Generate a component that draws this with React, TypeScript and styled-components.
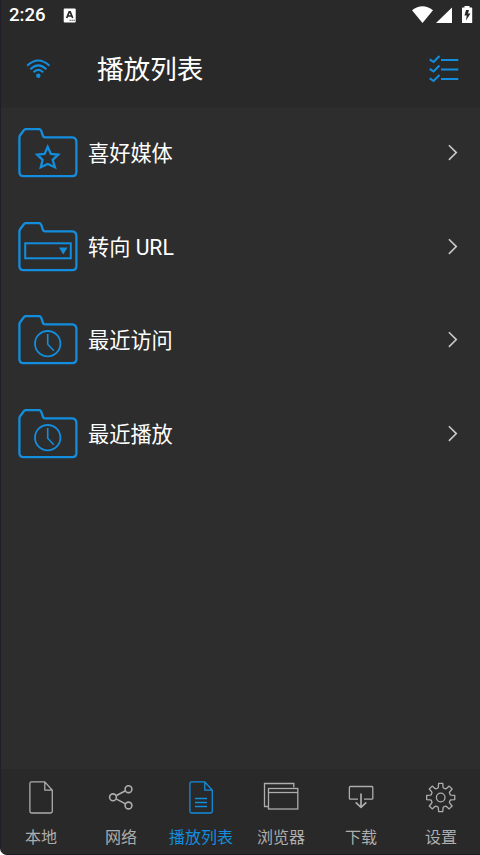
import React from 'react';
import styled, { createGlobalStyle } from 'styled-components';

const BLUE = '#138ddd';
const GREY = '#adadad';

const GlobalStyle = createGlobalStyle`
  * { box-sizing: border-box; }
  body { margin: 0; background: #fff; overflow: hidden; }
`;

const Screen = styled.div`
  width: 480px;
  height: 855px;
  display: flex;
  flex-direction: column;
  overflow: hidden;
  background: #2d2d2d;
  border-left: 1px solid #211e2a;
  border-bottom: 1px solid #1d1826;
  border-bottom-left-radius: 7px;
  color: #fff;
  font-family: Roboto, 'Noto Sans CJK SC', sans-serif;
  svg { display: block; flex: none; }
`;

const StatusBar = styled.div`
  height: 31px;
  flex: none;
  display: flex;
  align-items: center;
  padding: 0 7px 1px 8px;
  background: #292929;
`;

const Clock = styled.span`
  width: 54px;
  font-size: 18.6px;
  font-weight: 500;
  line-height: 31px;
`;

const StatusIcons = styled.div`
  margin-left: auto;
`;

const Header = styled.header`
  height: 77px;
  flex: none;
  display: flex;
  align-items: center;
  padding: 0 21px 0 25px;
  background: #292929;
  border-bottom: 1px solid #2b2b2b;
`;

const Title = styled.h1`
  margin: 0 auto 0 46px;
  padding-top: 2px;
  font-size: 26.6px;
  font-weight: 400;
  line-height: 74px;
`;

const List = styled.main`
  flex: 1;
  min-height: 0;
`;

const Row = styled.div`
  height: 93.5px;
  display: flex;
  align-items: center;
  gap: 10px;
  padding: 0 22px 3px 17px;
`;

const RowLabel = styled.span`
  flex: 1;
  padding-top: 2px;
  font-size: 21.2px;
  line-height: 30px;
`;

const Nav = styled.nav`
  height: 85px;
  flex: none;
  display: grid;
  grid-template-columns: repeat(6, 80px);
  background: #292929;
`;

const Tab = styled.div<{ $active?: boolean }>`
  display: flex;
  flex-direction: column;
  align-items: center;
  padding-top: 8px;
  color: ${p => (p.$active ? BLUE : GREY)};
`;

const TabLabel = styled.span`
  margin-top: 9px;
  font-size: 16px;
  line-height: 24px;
  white-space: nowrap;
`;

const AppBadge = () => (
  <svg width="13" height="15" viewBox="0 0 13 15">
    <rect x="0.7" y="0.6" width="12" height="13.8" rx="1" fill="#fff" />
    <path d="M3.700 10 6.200 3.900h1l2.500 6.100M4.700 8h4" fill="none" stroke="#292929" strokeWidth="1.7" />
    <path d="M6.600 12.300h1.200M8.600 12.300h1.200M10.600 12.300h1.200" stroke="#292929" strokeWidth="1.100" />
  </svg>
);

const SystemIcons = () => (
  <svg width="61" height="20" viewBox="412 5 61 20">
    <path d="M412 10.200Q422.500 2.300 433 10.200L422.500 23Z" fill="#fff" />
    <path d="M436 23 452 7.500V23Z" fill="#fff" />
    <path d="M464.500 6h5v1.500h2.200q.5 0 .5.500v14.500q0 .5-.5.500h-9.200q-.5 0-.5-.5v-14.500q0-.5.500-.5h2Z" fill="#fff" />
    <path d="M466 10h3l-1 3.500h2.500l-4.500 7 .7-5h-2.200Z" fill="#292929" />
  </svg>
);

const WifiIcon = () => (
  <svg width="25" height="22" viewBox="0 0 25 22" fill="none" stroke={BLUE} strokeWidth="2">
    <path d="M1.200 7.700Q12.300-2.700 23.500 7.700M4.300 11.300Q12.300 3.500 20.400 11.300M7.500 14.300Q12.300 9.500 17.200 14.300" />
    <circle cx="12.300" cy="17.700" r="2.200" fill={BLUE} stroke="none" />
  </svg>
);

const ChecklistIcon = () => (
  <svg width="30" height="28" viewBox="429 55 30 28" fill="none" stroke={BLUE} strokeWidth="2.100">
    <path d="M429.700 59.300 433.600 62 439.500 56M429.700 68.800 433.600 71.500 439.500 65.500M429.700 78.300 433.600 81 439.500 75" />
    <path d="M441 60h17.300M441 69.500h17.300M441 79h17.300" />
  </svg>
);

type FolderKind = 'star' | 'url' | 'clock';

const FolderIcon = ({ kind }: { kind: FolderKind }) => (
  <svg width="60" height="50" viewBox="0 0 60 50" fill="none" stroke={BLUE} strokeWidth="2.300">
    <path d="M2.300 7 6 2Q6.800 1.100 8 1.100H21Q22.500 1.100 23.200 2.700L25 8Q25.500 9.300 27 9.300H54.300Q58.400 9.800 58.400 14V44Q58.400 48.200 54.300 48.200H5.500Q1.400 48.200 1.400 44V9.500Q1.400 8.300 2.300 7Z" />
    {kind === 'star' && (
      <path d="M29.700 18.900 32.900 26 40.200 26.700 34.700 31.800 36.900 39.200 29.700 36 22.800 39.200 24.600 31.800 19.200 26.700 26.600 26Z" />
    )}
    {kind === 'url' && (
      <>
        <rect x="7.200" y="21.300" width="45.600" height="15" strokeWidth="2" />
        <path d="M41 25.500h8.500l-4.250 7Z" fill={BLUE} stroke="none" />
      </>
    )}
    {kind === 'clock' && (
      <>
        <circle cx="29.700" cy="28.700" r="12.700" strokeWidth="1.800" />
        <path d="M29.700 18.900V29.200L35.800 35.700" strokeWidth="1.600" />
      </>
    )}
  </svg>
);

const Chevron = () => (
  <svg width="10" height="18" viewBox="0 0 10 18" fill="none" stroke="#c9c9c9" strokeWidth="1.600">
    <path d="M.900 1.300 8.300 8.600 .900 15.900" />
  </svg>
);

type TabKind = 'local' | 'network' | 'playlist' | 'browser' | 'download' | 'settings';

const gearPath = (() => {
  const points: string[] = [];
  for (let i = 0; i < 8; i++) {
    const base = -90 + i * 45;
    [[-16, 9.900], [-12.500, 10.800], [-8.500, 14.200], [8.500, 14.200], [12.500, 10.800], [16, 9.900]].forEach(([turn, radius]) => {
      const a = ((base + turn) * Math.PI) / 180;
      points.push(`${(19.700 + radius * Math.cos(a)).toFixed(2)} ${(20.500 + radius * Math.sin(a)).toFixed(2)}`);
    });
  }
  return `M${points.join('L')}Z`;
})();

const TabIcon = ({ kind }: { kind: TabKind }) => (
  <svg width="40" height="40" viewBox="0 0 40 40" fill="none" stroke="currentColor" strokeWidth="1.300" strokeLinejoin="round">
    {(kind === 'local' || kind === 'playlist') && (
      <path d="M10.500 4.900H23.800L31.300 13.200V34.300Q31.300 36 29.600 36H10.500Q8.900 36 8.900 34.300V6.500Q8.900 4.900 10.500 4.900ZM23.800 4.900V13.200H31.300" />
    )}
    {kind === 'playlist' && <path d="M14 21.500H26M14 25.500H26M14 29.500H26" />}
    {kind === 'network' && (
      <g strokeWidth="1.600">
        <circle cx="12" cy="20.300" r="3.400" />
        <circle cx="27.500" cy="12.200" r="3.400" />
        <circle cx="27.500" cy="28.500" r="3.400" />
        <path d="M15 18.700 24.500 13.800M15 21.900 24.500 26.900" />
      </g>
    )}
    {kind === 'browser' && (
      <g strokeLinejoin="miter">
        <path d="M7 29.500H3.500V6.500H32.800V10.500" />
        <rect x="7.500" y="11.500" width="29.300" height="20.500" />
        <path d="M7.500 15.500H36.800" />
      </g>
    )}
    {kind === 'download' && (
      <>
        <path d="M17 22.200H9.200Q8.400 22.200 8.400 21.400V10.400Q8.400 9.500 9.200 9.500H30.900Q31.800 9.500 31.800 10.400V21.400Q31.800 22.200 30.900 22.200H23" />
        <path d="M20 16.500V30.300M14.700 25.300 20 30.300 25.300 25.300" strokeWidth="1.700" />
      </>
    )}
    {kind === 'settings' && (
      <>
        <path d={gearPath} />
        <circle cx="19.700" cy="20.500" r="4.300" />
      </>
    )}
  </svg>
);

const folders: { kind: FolderKind; label: string }[] = [
  { kind: 'star', label: '喜好媒体' },
  { kind: 'url', label: '转向 URL' },
  { kind: 'clock', label: '最近访问' },
  { kind: 'clock', label: '最近播放' },
];

const tabs: { kind: TabKind; label: string }[] = [
  { kind: 'local', label: '本地' },
  { kind: 'network', label: '网络' },
  { kind: 'playlist', label: '播放列表' },
  { kind: 'browser', label: '浏览器' },
  { kind: 'download', label: '下载' },
  { kind: 'settings', label: '设置' },
];

export default function App() {
  return (
    <>
      <GlobalStyle />
      <Screen>
        <StatusBar>
          <Clock>2:26</Clock>
          <AppBadge />
          <StatusIcons><SystemIcons /></StatusIcons>
        </StatusBar>
        <Header>
          <WifiIcon />
          <Title>播放列表</Title>
          <ChecklistIcon />
        </Header>
        <List>
          {folders.map(item => (
            <Row key={item.label}>
              <FolderIcon kind={item.kind} />
              <RowLabel>{item.label}</RowLabel>
              <Chevron />
            </Row>
          ))}
        </List>
        <Nav>
          {tabs.map(tab => (
            <Tab key={tab.kind} $active={tab.kind === 'playlist'}>
              <TabIcon kind={tab.kind} />
              <TabLabel>{tab.label}</TabLabel>
            </Tab>
          ))}
        </Nav>
      </Screen>
    </>
  );
}
